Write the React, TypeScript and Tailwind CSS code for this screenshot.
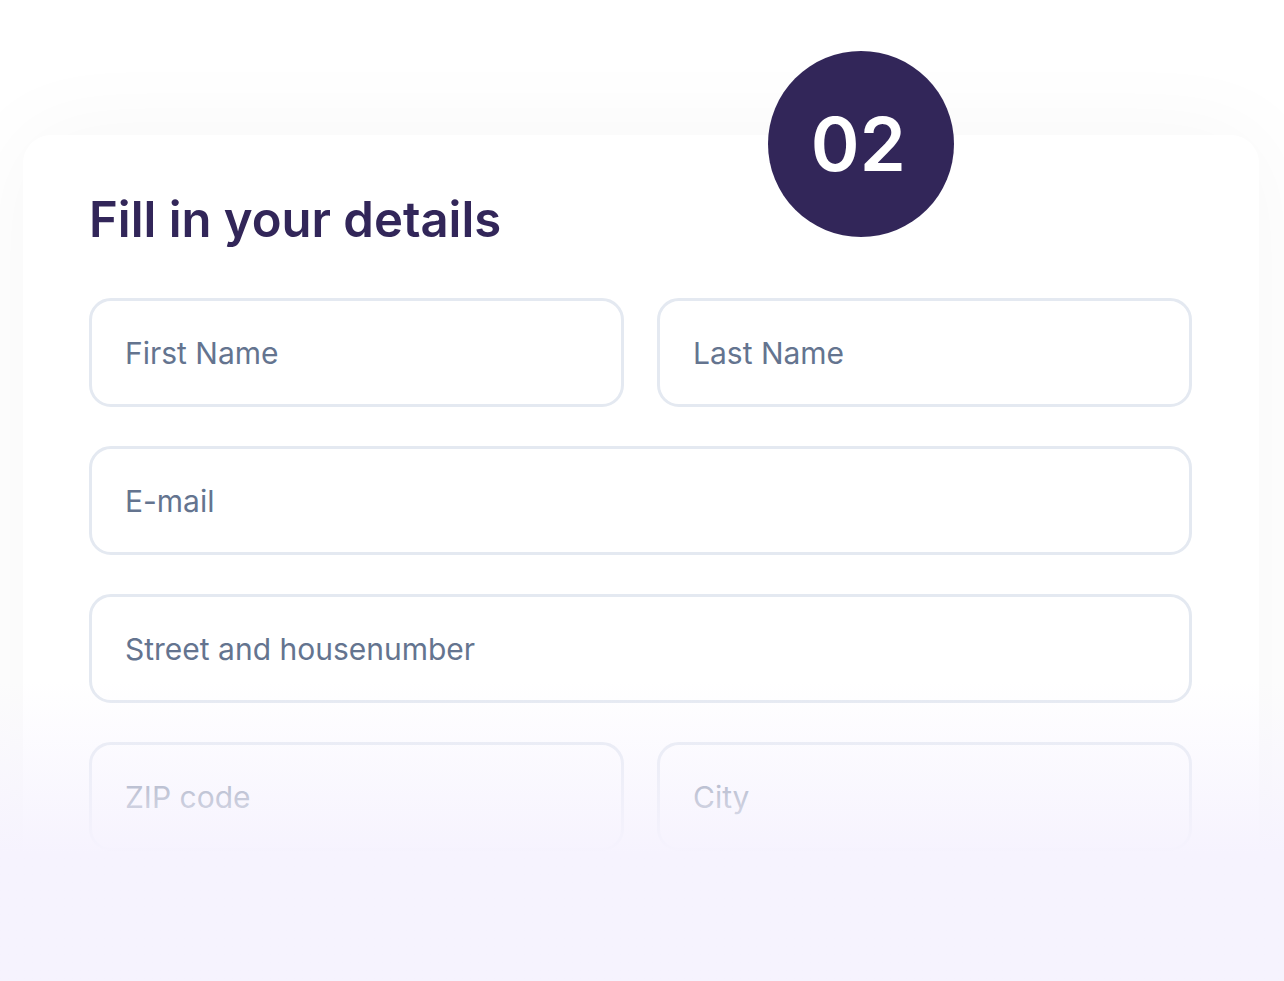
import { useId } from "react";

function Field({ label, type = "text", className = "" }: { label: string; type?: string; className?: string }) {
  const id = useId();
  return (
    <div className={`grid items-center ${className}`}>
      <input
        id={id}
        type={type}
        placeholder=" "
        className="peer col-start-1 row-start-1 h-[109px] w-full min-w-0 rounded-[22px] border-3 border-[#e4e9f1] bg-white px-[33px] text-[30px] text-[#64748f] outline-none focus:border-[#322659]"
      />
      <label
        htmlFor={id}
        className="pointer-events-none invisible z-10 col-start-1 row-start-1 px-9 text-[30px] leading-9 text-[#64748f] peer-placeholder-shown:visible"
      >
        {label}
      </label>
    </div>
  );
}

export default function App() {
  return (
    <main className="relative flex min-h-screen flex-col overflow-hidden bg-white pt-[135px] pr-[25px] pl-[23px] font-['Inter',sans-serif]">
      <section className="relative grow rounded-[28px] bg-white pt-[55px] pr-[67px] pb-16 pl-[66px] shadow-[0_0_100px_rgba(0,0,0,0.04)]">
        <div className="absolute -top-[84px] left-[60.3%] flex size-[186px] items-center justify-center rounded-full bg-[#322659] pr-1.5 text-[74px] font-semibold text-white">
          02
        </div>
        <h1 className="text-[49px] leading-[60px] font-semibold text-[#322659]">Fill in your details</h1>
        <form className="mt-12 grid grid-cols-2 gap-x-[33px] gap-y-[39px]">
          <Field label="First Name" />
          <Field label="Last Name" />
          <Field label="E-mail" type="email" className="col-span-2" />
          <Field label="Street and housenumber" className="col-span-2" />
          <Field label="ZIP code" />
          <Field label="City" />
        </form>
      </section>
      <div className="pointer-events-none absolute inset-x-0 bottom-0 z-20 h-[300px] bg-linear-to-b from-[#f6f3fe]/0 to-[#f6f3fe] to-58%" />
    </main>
  );
}
